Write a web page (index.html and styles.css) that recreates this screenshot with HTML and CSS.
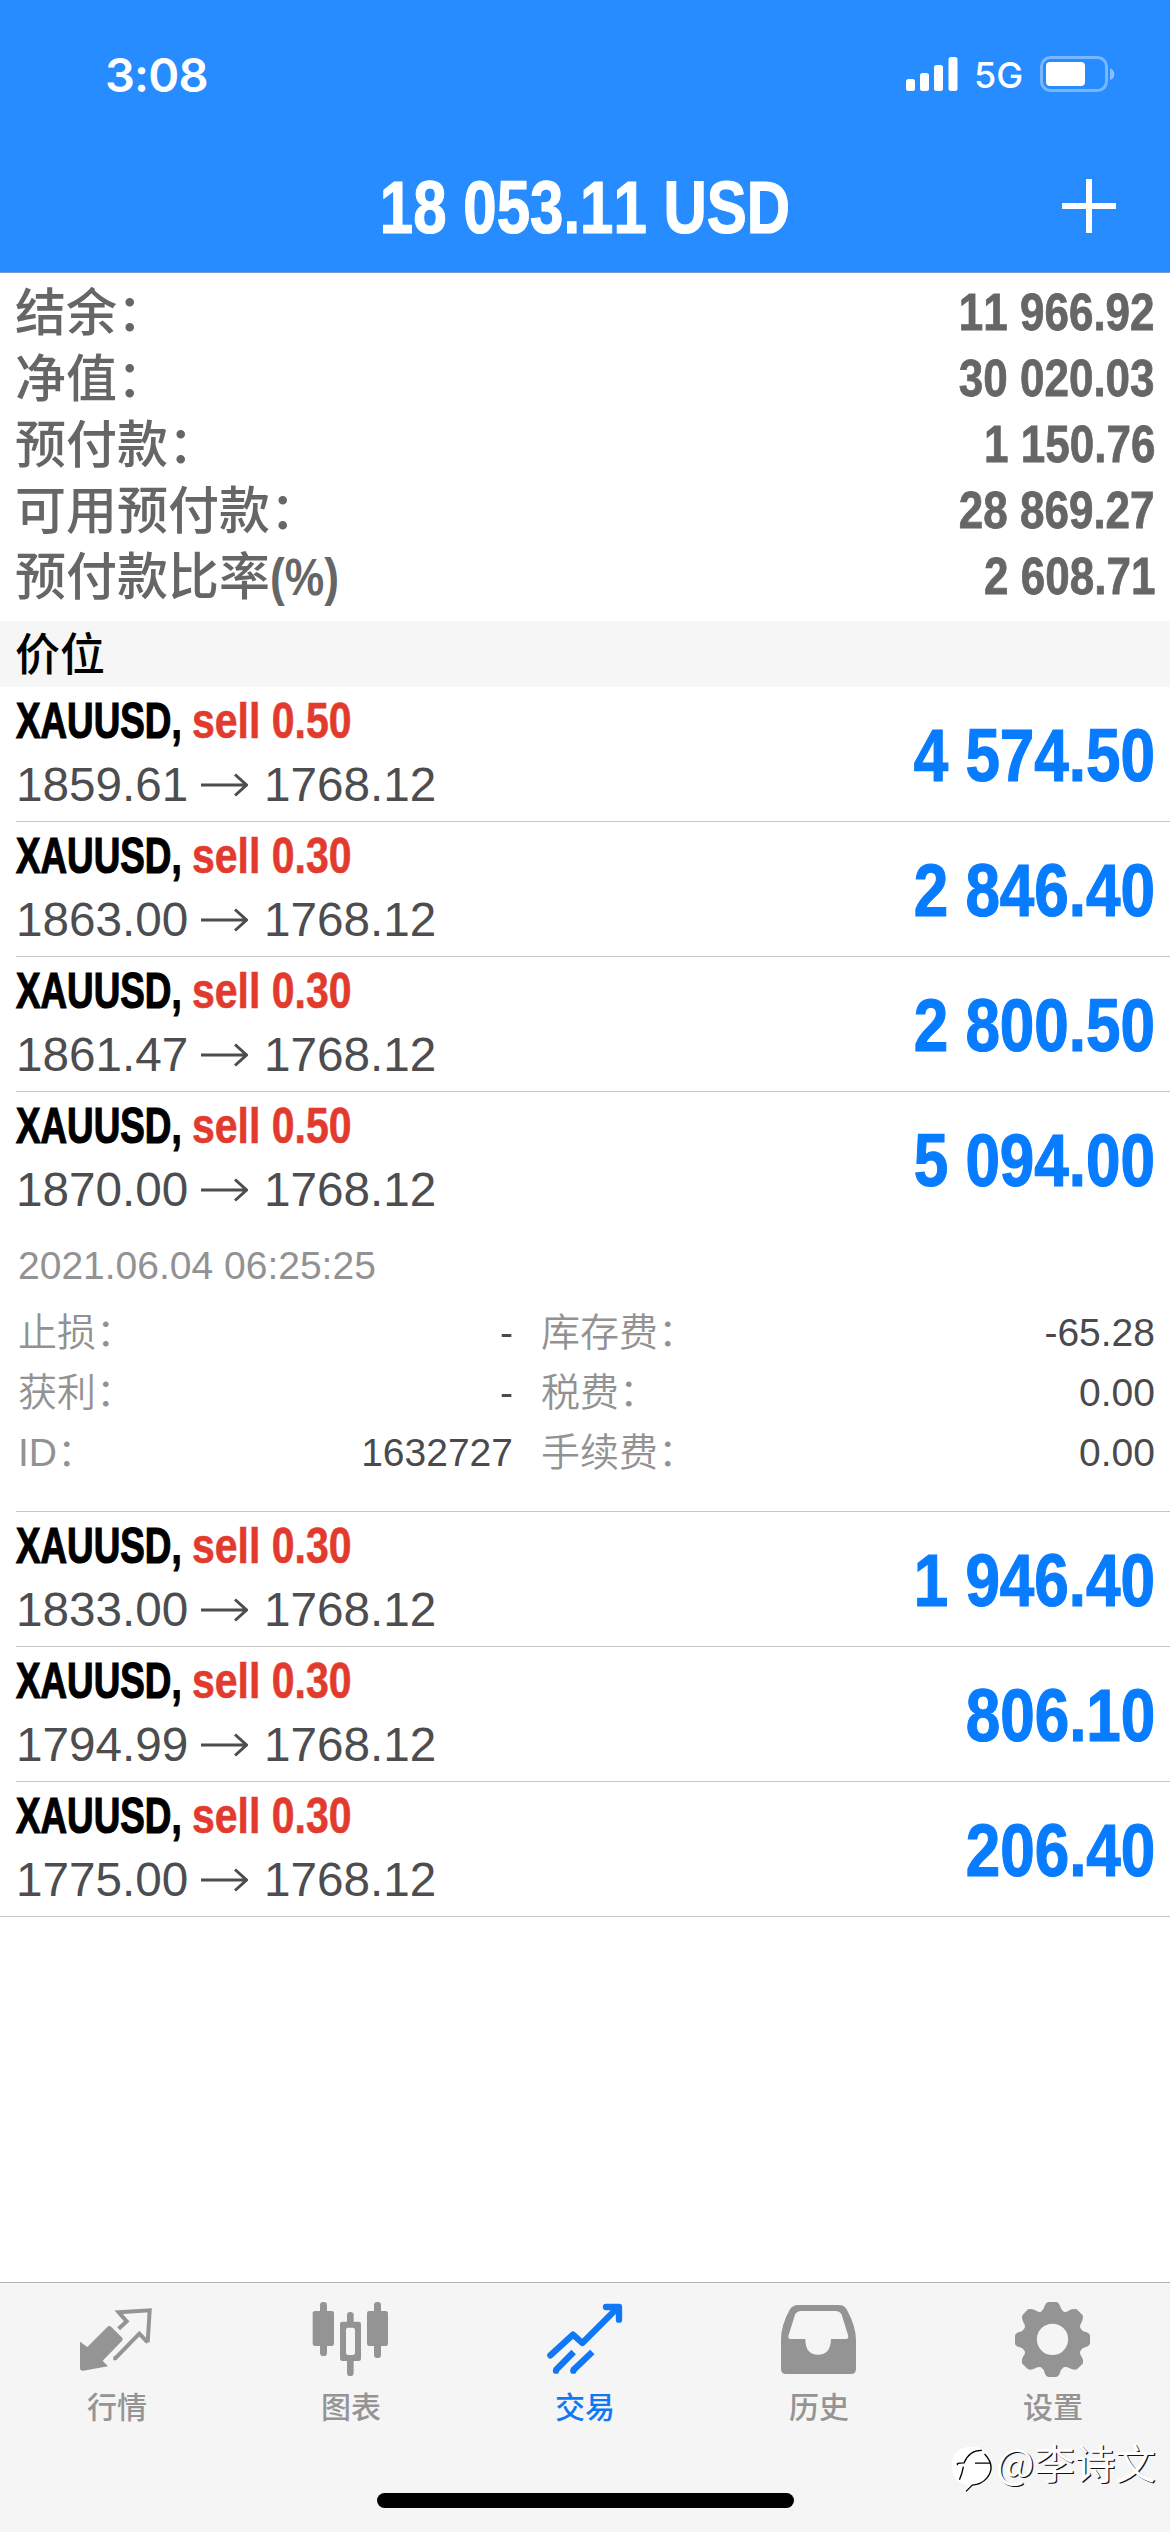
FILE: index.html
```html
<!DOCTYPE html>
<html lang="zh-CN">
<head>
<meta charset="utf-8">
<title>交易</title>
<link rel="stylesheet" href="styles.css">
</head>
<body>
<div class="screen">
  <header class="header">
    <div class="status">
      <span class="time">3:08</span>
      <div class="status-right">
        <svg class="signal" viewBox="0 0 52 34"><g fill="#fff"><rect x="0" y="22" width="9" height="12" rx="2.5"/><rect x="14" y="16" width="9" height="18" rx="2.5"/><rect x="28" y="8" width="9" height="26" rx="2.5"/><rect x="42.500" y="0" width="9" height="34" rx="2.5"/></g></svg>
        <span class="net">5G</span>
        <svg class="battery" viewBox="0 0 76 36"><rect x="1.500" y="1.500" width="65" height="33" rx="9" fill="none" stroke="#fff" stroke-opacity=".38" stroke-width="3"/><rect x="6" y="6" width="39" height="24" rx="4" fill="#fff"/><path d="M70 12.500a6 6 0 0 1 0 11.500z" fill="#fff" fill-opacity=".45"/></svg>
      </div>
    </div>
    <div class="titlebar">
      <h1 class="title">18 053.11 USD</h1>
      <svg class="plus" viewBox="0 0 54 54"><path d="M0 27H54M27 0V54" stroke="#fff" stroke-width="6"/></svg>
    </div>
  </header>

  <section class="summary">
    <div class="sum-row"><span>结余：</span><b>11 966.92</b></div>
    <div class="sum-row"><span>净值：</span><b>30 020.03</b></div>
    <div class="sum-row"><span>预付款：</span><b>1 150.76</b></div>
    <div class="sum-row"><span>可用预付款：</span><b>28 869.27</b></div>
    <div class="sum-row"><span>预付款比率<i class="pct">(%)</i></span><b>2 608.71</b></div>
  </section>

  <h2 class="section">价位</h2>

  <main class="positions">
    <article class="pos"><div class="pos-main"><div><div class="name"><span class="sym">XAUUSD,</span><span class="side">sell 0.50</span></div><div class="price"><span class="open">1859.61</span><svg class="arrow" viewBox="0 0 47 24"><path d="M0 12H45M34 1.500L45.500 12L34 22.500"/></svg><span>1768.12</span></div></div><strong class="profit">4 574.50</strong></div></article>
    <article class="pos"><div class="pos-main"><div><div class="name"><span class="sym">XAUUSD,</span><span class="side">sell 0.30</span></div><div class="price"><span class="open">1863.00</span><svg class="arrow" viewBox="0 0 47 24"><path d="M0 12H45M34 1.500L45.500 12L34 22.500"/></svg><span>1768.12</span></div></div><strong class="profit">2 846.40</strong></div></article>
    <article class="pos"><div class="pos-main"><div><div class="name"><span class="sym">XAUUSD,</span><span class="side">sell 0.30</span></div><div class="price"><span class="open">1861.47</span><svg class="arrow" viewBox="0 0 47 24"><path d="M0 12H45M34 1.500L45.500 12L34 22.500"/></svg><span>1768.12</span></div></div><strong class="profit">2 800.50</strong></div></article>
    <article class="pos"><div class="pos-main"><div><div class="name"><span class="sym">XAUUSD,</span><span class="side">sell 0.50</span></div><div class="price"><span class="open">1870.00</span><svg class="arrow" viewBox="0 0 47 24"><path d="M0 12H45M34 1.500L45.500 12L34 22.500"/></svg><span>1768.12</span></div></div><strong class="profit">5 094.00</strong></div>
      <div class="detail">
        <div class="date">2021.06.04 06:25:25</div>
        <div class="grid">
          <div class="cell"><span>止损：</span><em>-</em></div><div class="cell"><span>库存费：</span><em>-65.28</em></div>
          <div class="cell"><span>获利：</span><em>-</em></div><div class="cell"><span>税费：</span><em>0.00</em></div>
          <div class="cell"><span>ID：</span><em>1632727</em></div><div class="cell"><span>手续费：</span><em>0.00</em></div>
        </div>
      </div>
    </article>
    <article class="pos"><div class="pos-main"><div><div class="name"><span class="sym">XAUUSD,</span><span class="side">sell 0.30</span></div><div class="price"><span class="open">1833.00</span><svg class="arrow" viewBox="0 0 47 24"><path d="M0 12H45M34 1.500L45.500 12L34 22.500"/></svg><span>1768.12</span></div></div><strong class="profit">1 946.40</strong></div></article>
    <article class="pos"><div class="pos-main"><div><div class="name"><span class="sym">XAUUSD,</span><span class="side">sell 0.30</span></div><div class="price"><span class="open">1794.99</span><svg class="arrow" viewBox="0 0 47 24"><path d="M0 12H45M34 1.500L45.500 12L34 22.500"/></svg><span>1768.12</span></div></div><strong class="profit">806.10</strong></div></article>
    <article class="pos last"><div class="pos-main"><div><div class="name"><span class="sym">XAUUSD,</span><span class="side">sell 0.30</span></div><div class="price"><span class="open">1775.00</span><svg class="arrow" viewBox="0 0 47 24"><path d="M0 12H45M34 1.500L45.500 12L34 22.500"/></svg><span>1768.12</span></div></div><strong class="profit">206.40</strong></div></article>
  </main>

  <footer class="footer">
    <nav class="tabs">
      <a class="tab"><svg viewBox="0 36 702 300">
        <path fill="currentColor" d="M240 215L262 231L322 171Q328 165 334 171L365 202Q371 208 365 214L308 272L324 289L250 302Q240 303 240 294Z"/>
        <path fill="none" stroke="currentColor" stroke-width="12" d="M356 176L380 154L356 127L449 121L443 217M340 265H346L418 191L443 217" stroke-linejoin="miter"/></svg><span>行情</span></a>
      <a class="tab"><svg viewBox="702 36 702 300"><g fill="currentColor"><rect x="938" y="123" width="64" height="105" rx="7"/><rect x="960" y="96" width="21" height="162" rx="10"/><rect x="1101" y="123" width="63" height="105" rx="7"/><rect x="1122" y="96" width="21" height="168" rx="10"/><path fill-rule="evenodd" d="M1027 155H1041V136Q1041 126 1051 126T1061 136V155H1076Q1083 155 1083 162V266Q1083 273 1076 273H1061V308Q1061 318 1051 318T1041 308V273H1027Q1020 273 1020 266V162Q1020 155 1027 155ZM1045 173Q1038 173 1038 180V248Q1038 255 1045 255H1058Q1065 255 1065 248V180Q1065 173 1058 173Z"/></g></svg><span>图表</span></a>
      <a class="tab active"><svg viewBox="144 36 702 300"><g fill="none" stroke="currentColor" stroke-width="19" stroke-linejoin="round"><path stroke-linecap="round" d="M391 256L459 194L487 219L592 114M558 111H597V149"/><path d="M461 246L407 301M517 246L459 301"/></g><g fill="currentColor"><circle cx="408" cy="302" r="9.500"/><circle cx="460" cy="302" r="9.500"/></g></svg><span>交易</span></a>
      <a class="tab"><svg viewBox="-294 36 702 300"><path fill="currentColor" fill-rule="evenodd" d="M-6 105H117Q133 105 140 118Q168 170 168 210V296Q168 312 153 312H-42Q-57 312 -57 296V210Q-57 165 -31 119Q-22 105 -6 105ZM4 123Q-10 123 -15 134L-34 195Q-38 207 -28 207H16Q16 254 54 254T93 207H138Q147 207 144 195L125 134Q120 123 105 123Z"/></svg><span>历史</span></a>
      <a class="tab"><svg viewBox="408 36 702 300"><path fill="currentColor" fill-rule="evenodd" d="M745 96H770Q777 98 780 107Q783 120 791 125Q799 128 808 121Q821 115 830 118L848 136Q851 145 844 158Q838 167 841 174Q845 183 857 186Q869 189 870 197V221Q868 228 857 231Q845 234 841 243Q838 250 844 259Q852 271 848 281L831 298Q821 301 809 295Q799 289 791 292Q783 297 780 309Q776 320 768 321H745Q737 319 734 309Q731 297 723 292Q715 289 706 295Q693 302 684 298L667 281Q663 271 670 259Q677 250 674 243Q670 234 658 231Q646 228 645 221V197Q646 189 658 186Q670 183 674 174Q677 167 671 158Q664 145 667 136L684 118Q693 115 706 121Q715 128 723 125Q731 120 734 107Q737 98 745 96ZM757.500 161A47 47 0 1 0 757.500 255A47 47 0 1 0 757.500 161Z"/></svg><span>设置</span></a>
    </nav>
    <div class="home"></div>
  </footer>

  <div class="watermark">
    <svg viewBox="450 525 132 145"><path fill="#fff" d="M516 530Q575 530 575 588Q575 640 520 648L497 667L503 645Q455 640 455 588Q455 530 516 530Z"/><path fill="none" stroke="#000" stroke-width="4" d="M472 586V581Q476 579 492 579Q508 540 546 541M490 590Q486 612 478 630M525 580H572M554 552Q590 590 560 626Q545 644 517 646L498 665"/></svg>
    <span>@李诗文</span>
  </div>
</div>
</body>
</html>
```
FILE: styles.css
```css
* { box-sizing: border-box; margin: 0; padding: 0; }
body {
  width: 1170px;
  height: 2532px;
  background: #fff;
  font-family: "Liberation Sans", "Noto Sans CJK SC", sans-serif;
  font-kerning: none;
}
svg { display: block; }
.screen { position: relative; width: 1170px; height: 2532px; overflow: hidden; display: flex; flex-direction: column; }

.header { height: 273px; background: #268cff; border-bottom: 1px solid #6e9fd4; color: #fff; }
.status { height: 148px; padding: 0 54px 0 105px; display: flex; justify-content: space-between; align-items: center; }
.time { font: 600 47px/1 Inter, sans-serif; letter-spacing: -.8px; }
.status-right { display: flex; align-items: center; }
.signal { width: 52px; height: 34px; }
.net { width: 82px; padding-left: 16px; font: 500 36px/48px Inter, sans-serif; padding-top: 2px; }
.battery { width: 76px; height: 36px; }
.titlebar { height: 124px; display: grid; grid-template-columns: 110px 1fr 110px; align-items: start; }
.title { grid-column: 2; text-align: center; font-size: 75px; font-weight: 700; line-height: 119px; white-space: nowrap; transform: scaleX(.8); -webkit-text-stroke: 1.2px #fff; }
.plus { width: 54px; height: 54px; margin-top: 31px; margin-left: 2px; }

.summary { height: 348px; padding: 6px 15px 0 15px; color: #666; }
.sum-row { height: 66px; line-height: 66px; display: flex; justify-content: space-between; }
.sum-row span { font-size: 51px; font-weight: 500; padding-top: 2px; }
.sum-row b { font-size: 52.5px; transform: scaleX(.838); transform-origin: 100% 50%; -webkit-text-stroke: .8px #666; }
.pct { display: inline-block; font-style: normal; font-weight: 700; transform: scaleX(.87); transform-origin: 0 50%; }

.section { height: 66px; background: #f6f6f6; padding: 2px 0 0 15px; font-size: 45px; font-weight: 500; line-height: 66px; color: #000; }

.pos { margin-left: 16px; border-bottom: 1px solid #c8c8c8; }
.pos.last { margin-left: 0; padding-left: 16px; }
.pos-main { height: 134px; padding-right: 15px; display: flex; justify-content: space-between; }
.name { height: 68px; line-height: 68px; font-size: 49.4px; font-weight: 700; display: flex; white-space: nowrap; }
.sym { width: 176px; color: #000; transform: scaleX(.745); transform-origin: 0 50%; -webkit-text-stroke: 1.2px #000; }
.side { color: #e23b2e; transform: scaleX(.83); transform-origin: 0 50%; -webkit-text-stroke: .6px #e23b2e; }
.price { height: 59px; line-height: 59px; font-size: 47.7px; color: #4d4d4f; display: flex; align-items: center; }
.open { width: 185px; }
.arrow { width: 47px; height: 24px; margin-right: 16px; fill: none; stroke: #4d4d4f; stroke-width: 3; }
.profit { font-size: 74px; line-height: 137px; color: #087cff; transform: scaleX(.838); transform-origin: 100% 50%; white-space: nowrap; -webkit-text-stroke: 1.2px #087cff; }

.detail { padding: 10px 15px 28px 2px; font-size: 39px; line-height: 60px; color: #929292; }
.date { height: 67px; }
.grid { display: grid; grid-template-columns: 495px 1fr; column-gap: 28px; }
.cell { height: 60px; display: flex; justify-content: space-between; }
.cell span { font-weight: 350; }
.cell em { font-style: normal; color: #4a4a4c; }

.footer { margin-top: auto; height: 250px; background: #f5f5f5; border-top: 1px solid #b2b2b2; display: flex; flex-direction: column; align-items: center; }
.tabs { width: 1170px; height: 210px; display: grid; grid-template-columns: repeat(5, 1fr); }
.tab { color: #949494; text-align: center; }
.tab svg { width: 234px; height: 100px; margin-top: -1px; }
.tab span { display: block; font-size: 30px; font-weight: 500; line-height: 44px; margin-top: 4px; }
.tab.active { color: #1178f5; }
.home { width: 417px; height: 15px; border-radius: 8px; background: #000; }

.watermark { position: absolute; left: 950px; top: 2445px; display: flex; color: #fff; }
.watermark svg { width: 44px; height: 48px; }
.watermark span { font: 40.5px/44px "Noto Sans CJK SC", sans-serif; margin: -5px 0 0 2px; text-shadow: 1.2px 1.2px 0 #111; white-space: nowrap; }
```
